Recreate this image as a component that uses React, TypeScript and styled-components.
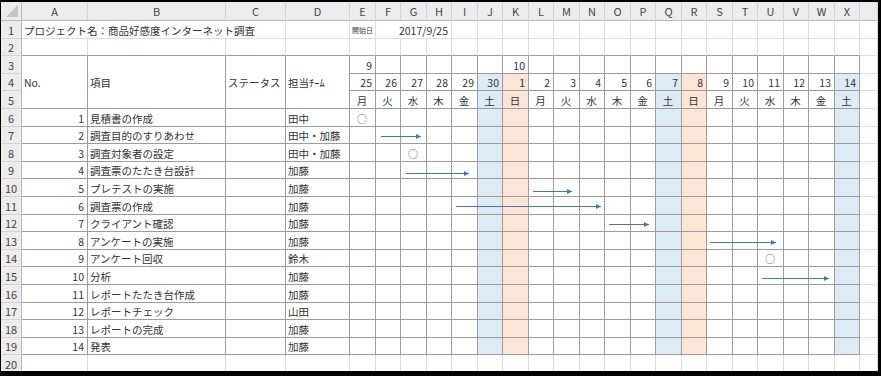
import React from 'react';
import styled, { createGlobalStyle } from 'styled-components';

const DARK = '#9c9c9c';
const LIGHT = '#dcdcdc';
const SAT = '#ddebf7';
const SUN = '#fce4d6';

const LETTERS = 'ABCDEFGHIJKLMNOPQRSTUVWX';
const DAYS = [25, 26, 27, 28, 29, 30, 1, 2, 3, 4, 5, 6, 7, 8, 9, 10, 11, 12, 13, 14];
const WEEK = '月火水木金土日';

const COL_WIDTHS = [21, 66, 138, 60, 64, ...DAYS.map((_, i) => (i % 2 === 0 ? 26 : 25)), 18];
const ROW_HEIGHTS = Array.from({ length: 20 }, (_, i) => [18, 17, 18, 17, 18][i % 5]);

const tasks = [
  { name: '見積書の作成', team: '田中', mark: 0 },
  { name: '調査目的のすりあわせ', team: '田中・加藤' },
  { name: '調査対象者の設定', team: '田中・加藤', mark: 2 },
  { name: '調査票のたたき台設計', team: '加藤' },
  { name: 'プレテストの実施', team: '加藤' },
  { name: '調査票の作成', team: '加藤' },
  { name: 'クライアント確認', team: '加藤' },
  { name: 'アンケートの実施', team: '加藤' },
  { name: 'アンケート回収', team: '鈴木', mark: 16 },
  { name: '分析', team: '加藤' },
  { name: 'レポートたたき台作成', team: '加藤' },
  { name: 'レポートチェック', team: '山田' },
  { name: 'レポートの完成', team: '加藤' },
  { name: '発表', team: '加藤' },
];

// hand-drawn arrow shapes laid over the sheet (sheet coordinates)
const arrows = [
  { x1: 380, x2: 420, y: 134 },
  { x1: 405, x2: 468, y: 171 },
  { x1: 532, x2: 571, y: 189 },
  { x1: 455, x2: 600, y: 204 },
  { x1: 608, x2: 648, y: 222 },
  { x1: 709, x2: 775, y: 240 },
  { x1: 761, x2: 828, y: 276 },
];

const inTable = (r: number, c: number) => r >= 3 && r <= 19 && c <= 23;

const weekendBg = (r: number, c: number) => {
  if (r < 4 || r > 19 || c < 4 || c > 23) return '#ffffff';
  const day = WEEK[(c - 4) % 7];
  if (day === '土') return SAT;
  if (day === '日') return SUN;
  return '#ffffff';
};

type Align = 'left' | 'right' | 'center';

interface SheetCellProps {
  r: number;
  c: number;
  cs?: number;
  rs?: number;
  align?: Align;
  children?: React.ReactNode;
}

const SheetCell: React.FC<SheetCellProps> = ({ r, c, cs = 1, rs = 1, align = 'left', children }) => {
  const lastR = r + rs - 1;
  const lastC = c + cs - 1;
  const table = inTable(lastR, lastC);
  return (
    <Cell
      $c={c + 2}
      $r={r + 1}
      $cs={cs}
      $rs={rs}
      $align={align}
      $right={table ? DARK : LIGHT}
      $bottom={table || (lastR === 2 && lastC <= 23) ? DARK : LIGHT}
      $bg={weekendBg(r, c)}
    >
      {children}
    </Cell>
  );
};

const emptyRun = (r: number, from: number, to: number) =>
  Array.from({ length: to - from + 1 }, (_, i) => <SheetCell key={`${r}-${from + i}`} r={r} c={from + i} />);

const dayCols = (r: number, render: (i: number) => React.ReactNode, align: Align) =>
  DAYS.map((_, i) => (
    <SheetCell key={`${r}-${i + 4}`} r={r} c={i + 4} align={align}>
      {render(i)}
    </SheetCell>
  ));

const App: React.FC = () => {
  return (
    <>
      <GlobalStyle />
      <Sheet>
        <Corner />
        {COL_WIDTHS.slice(1).map((_, i) => (
          <ColHeader key={`h${i}`}>{LETTERS[i] ?? ''}</ColHeader>
        ))}
        {ROW_HEIGHTS.map((_, i) => (
          <RowNum key={`n${i}`} $r={i + 2}>
            {i + 1}
          </RowNum>
        ))}

        {/* row 1 */}
        <SheetCell r={1} c={0} cs={3}>
          プロジェクト名：商品好感度インターネット調査
        </SheetCell>
        <SheetCell r={1} c={3} />
        <SheetCell r={1} c={4} align="right">
          <Tiny>開始日</Tiny>
        </SheetCell>
        <SheetCell r={1} c={5} cs={3} align="right">
          2017/9/25
        </SheetCell>
        {emptyRun(1, 8, 24)}

        {/* row 2 */}
        {emptyRun(2, 0, 24)}

        {/* rows 3-5: header */}
        <SheetCell r={3} c={0} rs={3}>
          No.
        </SheetCell>
        <SheetCell r={3} c={1} rs={3}>
          項目
        </SheetCell>
        <SheetCell r={3} c={2} rs={3}>
          ステータス
        </SheetCell>
        <SheetCell r={3} c={3} rs={3}>
          担当ﾁｰﾑ
        </SheetCell>
        {dayCols(3, (i) => (i === 0 ? 9 : i === 6 ? 10 : null), 'right')}
        <SheetCell r={3} c={24} />
        {dayCols(4, (i) => DAYS[i], 'right')}
        <SheetCell r={4} c={24} />
        {dayCols(5, (i) => WEEK[i % 7], 'center')}
        <SheetCell r={5} c={24} />

        {/* task rows */}
        {tasks.map((t, k) => {
          const r = k + 6;
          return (
            <React.Fragment key={r}>
              <SheetCell r={r} c={0} align="right">
                {k + 1}
              </SheetCell>
              <SheetCell r={r} c={1}>
                {t.name}
              </SheetCell>
              <SheetCell r={r} c={2} />
              <SheetCell r={r} c={3}>
                {t.team}
              </SheetCell>
              {dayCols(r, (i) => (t.mark === i ? <Mark>○</Mark> : null), 'center')}
              <SheetCell r={r} c={24} />
            </React.Fragment>
          );
        })}

        {/* row 20 */}
        {emptyRun(20, 0, 24)}

        <ArrowLayer width="877" height="369">
          <defs>
            <marker id="head" viewBox="0 0 6 6" refX="6" refY="3" markerWidth="6" markerHeight="5" orient="auto" markerUnits="userSpaceOnUse">
              <path d="M0 0 L6 3 L0 6 Z" fill="#4472c4" />
            </marker>
          </defs>
          {arrows.map((a, i) => (
            <line
              key={i}
              x1={a.x1}
              y1={a.y + 0.5}
              x2={a.x2}
              y2={a.y + 0.5}
              stroke="#4472c4"
              strokeWidth="1.2"
              markerEnd="url(#head)"
            />
          ))}
        </ArrowLayer>
      </Sheet>
    </>
  );
};

export default App;

const GlobalStyle = createGlobalStyle`
  html, body {
    margin: 0;
    padding: 0;
    background: #000;
  }
  body {
    font-family: "Noto Sans CJK JP", "Noto Sans", sans-serif;
  }
`;

const Sheet = styled.div`
  position: relative;
  margin: 2px 0 0 1px;
  width: 877px;
  height: 369px;
  overflow: hidden;
  background: #fff;
  display: grid;
  grid-template-columns: ${COL_WIDTHS.map((w) => `${w}px`).join(' ')};
  grid-template-rows: 19px ${ROW_HEIGHTS.map((h) => `${h}px`).join(' ')};
`;

const Corner = styled.div`
  position: relative;
  grid-column: 1;
  grid-row: 1;
  background: #ececec;
  border-right: 1px solid #b9b9b9;
  border-bottom: 1px solid #b9b9b9;
  box-sizing: border-box;

  &::after {
    content: '';
    position: absolute;
    right: 3px;
    bottom: 3px;
    width: 12px;
    height: 12px;
    background: #c4c4c4;
    clip-path: polygon(100% 0, 100% 100%, 0 100%);
  }
`;

const ColHeader = styled.div`
  grid-row: 1;
  display: flex;
  align-items: center;
  justify-content: center;
  background: #ececec;
  border-right: 1px solid #d2d2d2;
  border-bottom: 1px solid #b9b9b9;
  box-sizing: border-box;
  font-size: 11px;
  color: #444;
`;

const RowNum = styled.div<{ $r: number }>`
  grid-column: 1;
  grid-row: ${(p) => p.$r};
  display: flex;
  align-items: center;
  justify-content: center;
  background: #ececec;
  border-right: 1px solid #b9b9b9;
  border-bottom: 1px solid #d2d2d2;
  box-sizing: border-box;
  font-size: 11px;
  color: #444;
`;

const Cell = styled.div<{
  $c: number;
  $r: number;
  $cs: number;
  $rs: number;
  $align: Align;
  $right: string;
  $bottom: string;
  $bg: string;
}>`
  grid-column: ${(p) => p.$c} / span ${(p) => p.$cs};
  grid-row: ${(p) => p.$r} / span ${(p) => p.$rs};
  display: flex;
  align-items: center;
  justify-content: ${(p) => (p.$align === 'left' ? 'flex-start' : p.$align === 'right' ? 'flex-end' : 'center')};
  padding: 1px 3px 0 2px;
  box-sizing: border-box;
  background: ${(p) => p.$bg};
  border-right: 1px solid ${(p) => p.$right};
  border-bottom: 1px solid ${(p) => p.$bottom};
  font-size: 10.5px;
  color: #333;
  white-space: nowrap;
  overflow: visible;
  min-width: 0;
`;

const Tiny = styled.span`
  font-size: 7px;
  color: #444;
  margin-right: -1px;
`;

const Mark = styled.span`
  font-size: 10px;
  color: #555;
`;

const ArrowLayer = styled.svg`
  position: absolute;
  left: 0;
  top: 0;
  pointer-events: none;
`;
